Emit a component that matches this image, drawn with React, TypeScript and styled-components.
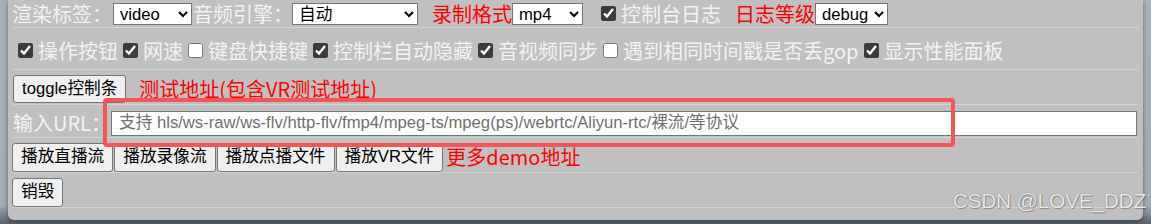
import styled, { createGlobalStyle } from "styled-components";

const GlobalStyle = createGlobalStyle`
  html, body {
    margin: 0;
    padding: 0;
  }
  body {
    height: 224px;
    overflow: hidden;
    background: linear-gradient(to bottom, #a9b1b9 0, #a2abb4 205px, #59626c 224px);
    font-family: "Noto Sans CJK SC", "Liberation Sans", sans-serif;
  }
`;

const Page = styled.div`
  padding: 0 8px;
`;

const Panel = styled.div`
  position: relative;
  background: #c0c0c0;
  border-radius: 0 0 6px 6px;
  padding-bottom: 12px;
  box-shadow: 0 2px 4px rgba(30, 36, 44, 0.55);
`;

const Row = styled.div<{ $h: number; $pt?: number }>`
  display: flex;
  align-items: center;
  box-sizing: border-box;
  height: ${(p) => p.$h}px;
  padding-top: ${(p) => p.$pt ?? 0}px;
  margin: 0 5px;
  border-bottom: 1px solid #d3d3d3;
  white-space: nowrap;
`;

const Label = styled.span<{ $ml?: number }>`
  color: #f3f3f3;
  font-size: 20px;
  line-height: 24px;
  margin-left: ${(p) => p.$ml ?? 0}px;
`;

const RedText = styled.span<{ $ml?: number }>`
  color: #ff0000;
  font-size: 20px;
  line-height: 24px;
  margin-left: ${(p) => p.$ml ?? 0}px;
`;

const controlFont = `font-family: "Liberation Sans", "Noto Sans CJK SC", sans-serif;
  font-size: 16.67px;`;

const Select = styled.select<{ $w: number; $ml?: number }>`
  ${controlFont}
  width: ${(p) => p.$w}px;
  height: 22px;
  margin: 0 0 0 ${(p) => p.$ml ?? 0}px;
  padding: 0 2px;
  color: #000;
  background: #fff;
  border: 1px solid #767676;
  border-radius: 0;
`;

const CheckItem = styled.label<{ $ml?: number }>`
  display: flex;
  align-items: center;
  gap: 5px;
  margin-left: ${(p) => p.$ml ?? 5}px;
`;

const Box = styled.input`
  width: 15px;
  height: 15px;
  margin: 0;
  accent-color: #3b3b3b;
`;

const Button = styled.button<{ $h?: number; $ml?: number }>`
  ${controlFont}
  height: ${(p) => p.$h ?? 29}px;
  padding: 0 8px;
  margin: 0 0 0 ${(p) => p.$ml ?? 0}px;
  color: #000;
  background: #efefef;
  border: 1px solid #767676;
  border-radius: 3px;
  line-height: 1;
`;

const ButtonGroup = styled.div`
  display: flex;
  align-items: center;
  gap: 1px;
  margin-left: -1px;
`;

const UrlInput = styled.input`
  ${controlFont}
  box-sizing: border-box;
  width: 1032px;
  height: 25px;
  margin: 0 1px 0 auto;
  padding: 0 7px;
  background: #fff;
  border: 1px solid #767676;
  border-radius: 0;
  &::placeholder {
    color: #707070;
  }
`;

const Annotation = styled.div`
  position: absolute;
  left: 95px;
  top: 98px;
  width: 852px;
  height: 49px;
  box-sizing: border-box;
  border: 4px solid #f25656;
  border-radius: 4px;
  pointer-events: none;
`;

const Watermark = styled.div`
  position: absolute;
  right: -3px;
  top: 189px;
  font-family: "Liberation Sans", sans-serif;
  font-size: 21px;
  letter-spacing: -0.3px;
  color: #e9e9e9;
  text-shadow: 0 0 1px rgba(0, 0, 0, 0.45), 1px 1px 1px rgba(0, 0, 0, 0.25);
`;

const checks: { text: string; on: boolean }[] = [
  { text: "操作按钮", on: true },
  { text: "网速", on: true },
  { text: "键盘快捷键", on: false },
  { text: "控制栏自动隐藏", on: true },
  { text: "音视频同步", on: true },
  { text: "遇到相同时间戳是否丢gop", on: false },
  { text: "显示性能面板", on: true },
];

const playButtons = ["播放直播流", "播放录像流", "播放点播文件", "播放VR文件"];

export default function App() {
  return (
    <Page>
      <GlobalStyle />
      <Panel>
        <Row $h={28}>
          <Label $ml={-1}>渲染标签：</Label>
          <Select $w={79} $ml={1} defaultValue="video">
            <option value="video">video</option>
            <option value="canvas">canvas</option>
          </Select>
          <Label $ml={1}>音频引擎：</Label>
          <Select $w={126} $ml={-1} defaultValue="auto">
            <option value="auto">自动</option>
          </Select>
          <RedText $ml={14}>录制格式</RedText>
          <Select $w={71} $ml={0} defaultValue="mp4">
            <option value="mp4">mp4</option>
            <option value="webm">webm</option>
          </Select>
          <CheckItem $ml={18}>
            <Box type="checkbox" defaultChecked />
            <Label>控制台日志</Label>
          </CheckItem>
          <RedText $ml={14}>日志等级</RedText>
          <Select $w={73} $ml={0} defaultValue="debug">
            <option value="debug">debug</option>
          </Select>
        </Row>

        <Row $h={42} $pt={4}>
          {checks.map((c) => (
            <CheckItem key={c.text}>
              <Box type="checkbox" defaultChecked={c.on} />
              <Label>{c.text}</Label>
            </CheckItem>
          ))}
        </Row>

        <Row $h={35} $pt={4}>
          <Button $h={28}>toggle控制条</Button>
          <RedText $ml={13}>测试地址(包含VR测试地址)</RedText>
        </Row>

        <Row $h={33} $pt={4}>
          <Label>输入URL：</Label>
          <UrlInput placeholder="支持 hls/ws-raw/ws-flv/http-flv/fmp4/mpeg-ts/mpeg(ps)/webrtc/Aliyun-rtc/裸流/等协议" />
        </Row>

        <Row $h={35} $pt={4}>
          <ButtonGroup>
            {playButtons.map((b) => (
              <Button key={b}>{b}</Button>
            ))}
          </ButtonGroup>
          <RedText $ml={3}>更多demo地址</RedText>
        </Row>

        <Row $h={35} $pt={4}>
          <Button $ml={-1}>销毁</Button>
        </Row>

        <Annotation />
        <Watermark>CSDN @LOVE_DDZ</Watermark>
      </Panel>
    </Page>
  );
}
